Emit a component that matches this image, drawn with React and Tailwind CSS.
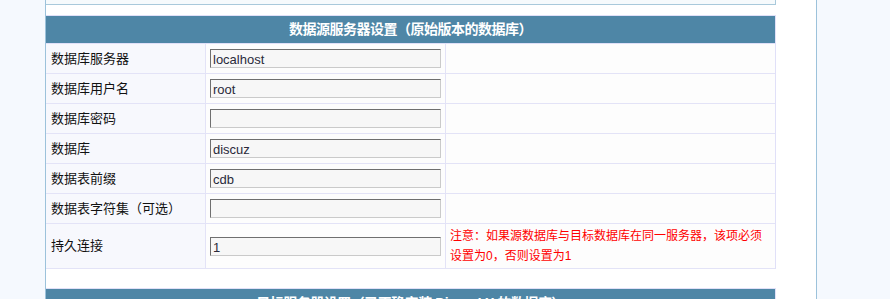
import React from "react";

const rows = [
  { label: "数据库服务器", value: "localhost" },
  { label: "数据库用户名", value: "root" },
  { label: "数据库密码", value: "" },
  { label: "数据库", value: "discuz" },
  { label: "数据表前缀", value: "cdb" },
  { label: "数据表字符集（可选）", value: "" },
];

const Field = ({ value }) => (
  <div className="w-[231px] h-[19px] bg-[#f7f7f7] border-t border-l border-t-[#6f6f6f] border-l-[#6f6f6f] border-b border-r border-b-[#cacaca] border-r-[#cacaca] flex items-end pl-[2px] text-[13px] leading-[15px] text-[#2a2a3a]">
    {value}
  </div>
);

const App = () => {
  return (
    <div
      className="flex w-[890px] h-[299px] overflow-hidden bg-white"
      style={{ fontFamily: '"Liberation Sans", "Noto Sans CJK SC", sans-serif' }}
    >
      <div className="w-[46px] shrink-0 bg-[#f5f9fe] border-r border-[#9cc2db]" />

      <div className="w-[770px] shrink-0 bg-white">
        <div className="w-[730px] h-[5px] bg-[#f6fafc] border-r border-b border-[#a9c9db]" />

        <div className="mt-[10px] w-[730px] border-t border-r border-[#e0e0f8]">
          <div className="h-[28px] bg-[#4e86a6] border-b border-[#e0e0f8] flex items-center justify-center text-white font-bold text-[14px] tracking-[-0.5px]">
            数据源服务器设置（原始版本的数据库）
          </div>

          {rows.map((r) => (
            <div key={r.label} className="flex h-[30px] border-b border-[#e3e3f7]">
              <div className="w-[160px] shrink-0 bg-[#f7f8fd] border-r border-[#e3e3f7] flex items-center pl-[5px] text-[13px] text-[#111]">
                {r.label}
              </div>
              <div className="w-[240px] shrink-0 bg-[#fdfdfd] border-r border-[#e3e3f7] flex items-center pl-[4px]">
                <Field value={r.value} />
              </div>
              <div className="flex-1 bg-[#fdfdfd]" />
            </div>
          ))}

          <div className="flex h-[45px] border-b border-[#e3e3f7]">
            <div className="w-[160px] shrink-0 bg-[#f7f8fd] border-r border-[#e3e3f7] flex items-center pl-[5px] text-[13px] text-[#111]">
              持久连接
            </div>
            <div className="w-[240px] shrink-0 bg-[#fdfdfd] border-r border-[#e3e3f7] flex items-center pl-[4px]">
              <Field value="1" />
            </div>
            <div className="flex-1 bg-[#fdfdfd] flex items-center pl-[4px] text-[12px] leading-[20px] text-[#ff0000]">
              <p className="whitespace-nowrap">
                注意：如果源数据库与目标数据库在同一服务器，该项必须
                <br />
                设置为0，否则设置为1
              </p>
            </div>
          </div>
        </div>

        <div className="mt-[19px] w-[730px] border-t border-r border-[#e0e0f8]">
          <div className="h-[28px] bg-[#4e86a6] flex items-center justify-center text-white font-bold text-[14px] tracking-[-0.5px]">
            目标服务器设置（已正确安装 Discuz! X 的数据库）
          </div>
        </div>
      </div>

      <div className="flex-1 bg-[#f5f9fe] border-l border-[#9cc2db]" />
    </div>
  );
};

export default App;
